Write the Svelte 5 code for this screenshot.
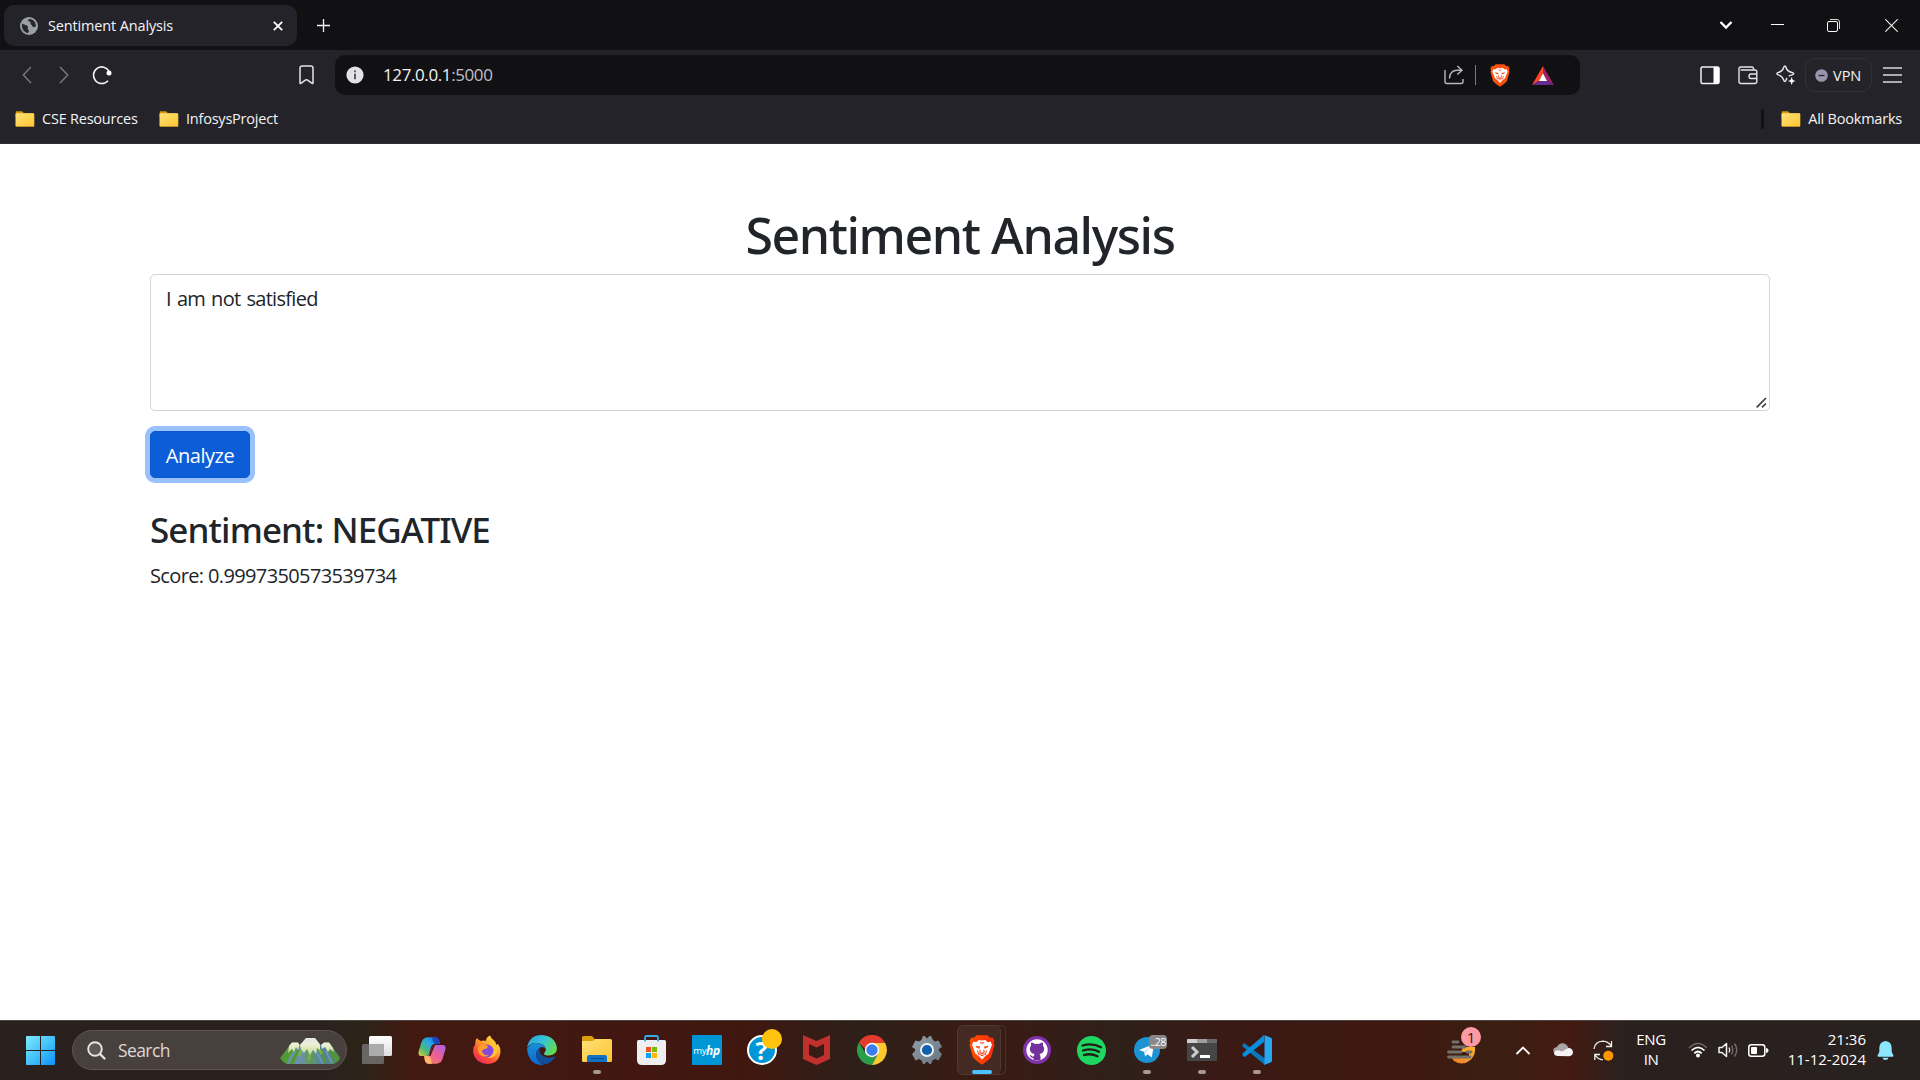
<script>
  let text = $state('I am not satisfied');
</script>

{#snippet folder()}
  <svg class="folder" width="20" height="17" viewBox="0 0 20 17">
    <path d="M.7 3V1.2Q.7.2 1.7.2H7L9 2.2H18.500V6H.7Z" fill="#d9980f" />
    <rect x=".5" y="2.200" width="18.800" height="13.600" rx="1.300" fill="url(#folderFill)" />
    <path d="M1 15.500H19" stroke="#c28a1c" stroke-width=".9" />
  </svg>
{/snippet}

{#snippet lion()}
  <path d="M3.500 5 5.500 5.600 7.500 3.800 10 4.200 12.500 3.800 14.500 5.600 16.500 5 17.700 7.400 16 11.800 15 14.300 12.500 16.200 10 19 7.500 16.200 5 14.300 4 11.800 2.300 7.400Z" fill="#fff" />
  <path d="M5 8.300 8.600 8.900 8 10.600 5.800 9.800ZM15 8.300 11.400 8.900 12 10.600 14.200 9.800Z" fill="#fb542b" />
  <path d="M8.500 5.700 10 6.400 11.500 5.700M8.700 11.200 8.300 13.200 10 14 11.700 13.200 11.300 11.200M6.500 12 7.500 15 10 14.200 12.500 15 13.500 12M8.700 16.200 10 15.600 11.300 16.200" fill="none" stroke="#fb542b" stroke-width=".85" />
{/snippet}

<svg class="defs" width="0" height="0">
  <defs>
    <linearGradient id="folderFill" x1="0" y1="0" x2="1" y2="1"><stop stop-color="#ffe17a" /><stop offset="1" stop-color="#fcc52f" /></linearGradient>
    <linearGradient id="braveFill" x1="0" y1="0" x2="1" y2="0"><stop stop-color="#ff5000" /><stop offset="1" stop-color="#ff2a0a" /></linearGradient>
  </defs>
</svg>

<div class="screen">
  <header class="browser">
    <div class="tabstrip">
      <div class="tab">
        <svg width="18" height="18" viewBox="0 0 18 18">
          <circle cx="9" cy="9" r="9" fill="#9aa0a6" />
          <path d="M2 6.500C3.800 7.800 6 7.800 7.600 9.200 8.800 10.400 6.800 11.400 8.200 12.800 9.500 13.800 8.700 15.300 8 16 4.300 15.600 1.300 12 2 6.500ZM9.200 2C7.500 3.500 7.800 4.800 9.800 4.600 11.500 5 9.800 6.700 11 7.600 12.800 8.200 11.500 9.800 13.500 9.900L15.900 9.500C16.300 5.500 13 2 9.200 2Z" fill="#27262b" />
        </svg>
        <span class="tabtitle">Sentiment Analysis</span>
        <svg class="tabclose" width="10" height="10" viewBox="0 0 10 10"><path d="M.8.800 9.200 9.200M9.200.8.800 9.200" stroke="#fff" stroke-width="1.800" /></svg>
      </div>
      <svg class="newtab" width="13" height="13" viewBox="0 0 13 13"><path d="M6.500 0V13M0 6.500H13" stroke="#f2f2f2" stroke-width="1.300" /></svg>
      <div class="windowbtns">
        <svg width="14" height="10" viewBox="0 0 14 10"><path d="M1.500 2 7 7.500 12.500 2" fill="none" stroke="#fff" stroke-width="2.300" /></svg>
        <svg width="13" height="13" viewBox="0 0 13 13"><path d="M0 5.500H13" stroke="#fff" /></svg>
        <svg width="13" height="13" viewBox="0 0 13 13"><path d="M3 .500H10Q12.500.5 12.500 3V10" fill="none" stroke="#d8d8d8" /><rect x=".5" y="2.500" width="10" height="10" rx="1.500" fill="none" stroke="#fff" /></svg>
        <svg width="13" height="13" viewBox="0 0 13 13"><path d="M.3.300 12.700 12.700M12.700.300.300 12.700" stroke="#eee" stroke-width="1.100" /></svg>
      </div>
    </div>

    <div class="toolbar">
      <div class="nav">
        <svg width="10" height="18" viewBox="0 0 10 18"><path d="M9 1 1.300 9 9 17" fill="none" stroke="#77767c" stroke-width="1.500" /></svg>
        <svg width="10" height="18" viewBox="0 0 10 18"><path d="M1 1 8.700 9 1 17" fill="none" stroke="#77767c" stroke-width="1.500" /></svg>
        <svg width="20" height="20" viewBox="0 0 20 20"><path d="M17.200 6.500A8.300 8.300 0 1 0 16 15.700" fill="none" stroke="#f2f2f4" stroke-width="1.600" /><circle cx="17" cy="8" r="2.500" fill="#fff" /></svg>
      </div>
      <svg class="bookmark" width="15" height="20" viewBox="0 0 15 20"><path d="M1 3.200Q1 1 3.200 1H11.800Q14 1 14 3.200V18Q14 19 13.100 18.300L8.300 14.900Q7.500 14.400 6.700 14.900L1.900 18.300Q1 19 1 18Z" fill="none" stroke="#e4e3ea" stroke-width="1.500" /></svg>
      <div class="address">
        <svg class="info" width="18" height="18" viewBox="0 0 18 18"><circle cx="9" cy="9" r="8.600" fill="#e3e2e9" /><path d="M9 7.800V13.300M9 4.500V6.200" stroke="#3a393f" stroke-width="1.600" /></svg>
        <span class="url">127.0.0.1<span class="port">:5000</span></span>
        <svg class="share" width="20" height="20" viewBox="0 0 20 20"><path d="M1 5V16.500Q1 18.500 3 18.500H17Q19 18.500 19 16.500V14M5.500 13.500C5.500 8 9 5.200 13 5.200H17.500M13.300.900 18 5.200 13.300 9.500" fill="none" stroke="#b9b8bf" stroke-width="1.400" /></svg>
        <span class="sep"></span>
        <svg class="brave" width="20" height="23" viewBox="0 0 20 23"><path d="M5.600.2H14.400L16 2 18 1.900 19.700 4.300 19 6 19.600 7.700 17 17 14 20 10 22.800 6 20 3 17 .4 7.700 1 6 .3 4.300 2 1.900 4 2Z" fill="#fb4f0d" />{@render lion()}</svg>
        <svg width="22" height="19" viewBox="0 0 22 19"><path d="M11 0 0 19 7.300 14.800 11 7.500Z" fill="#ff4724" /><path d="M11 0 22 19 14.700 14.800 11 7.500Z" fill="#9e1f63" /><path d="M0 19H22L14.700 14.800H7.300Z" fill="#662d91" /><path d="M11 7.300 15 15H7Z" fill="#fff" /></svg>
      </div>
      <div class="actions">
        <svg width="20" height="19" viewBox="0 0 20 19"><rect x="1" y="1" width="18" height="16.500" rx="1.500" fill="none" stroke="#f0f0f2" stroke-width="1.500" /><path d="M13.500 1H18Q19.200 1 19.200 2V16.500Q19.200 17.700 18 17.700H13.500Z" fill="#fff" /></svg>
        <svg width="20" height="19" viewBox="0 0 20 19"><path d="M15.500 4V2.500Q15.500 1 14 1H2.500Q1 1 1 2.500V15.500Q1 17.500 3 17.500H16.500Q18.800 17.500 18.800 15.500V5.500Q18.800 4 17 4H2.500M19 8H13Q11 8 11 10.300 11 12.500 13 12.500H19" fill="none" stroke="#e4e3ea" stroke-width="1.400" /></svg>
        <svg width="20" height="20" viewBox="0 0 20 20"><path d="M12.800 11.200Q13.800 10.500 16 9.900 17.700 9.400 17.700 8.700 17.700 8 16 7.500 11 6.300 10 2.200 9.600 1 8.900 1 8.200 1 7.800 2.200 6.500 6.300 2.200 7.500 1 7.900 1 8.700 1 9.500 2.200 9.900 6.300 11 7.800 15.300 8.200 16.500 8.900 16.500 9.600 16.500 10 15.300 10.400 14 11 13" fill="none" stroke="#e4e3ea" stroke-width="1.500" /><path d="M15.700 12 16.800 14.900 19.500 16 16.800 17.100 15.700 20 14.600 17.100 12 16 14.600 14.900Z" fill="#fff" /></svg>
      </div>
      <div class="vpn">
        <svg width="13" height="13" viewBox="0 0 13 13"><circle cx="6.500" cy="6.500" r="6.300" fill="#9796ad" /><path d="M3.500 6.500H9.500" stroke="#242329" stroke-width="1.300" /></svg>
        <span>VPN</span>
      </div>
      <svg class="menu" width="19" height="16" viewBox="0 0 19 16"><path d="M0 1H19M0 8H19M0 15H19" stroke="#dad9df" stroke-width="1.500" /></svg>
    </div>

    <div class="bookmarks">
      {@render folder()}<span class="bm cse">CSE Resources</span>
      {@render folder()}<span class="bm inf">InfosysProject</span>
      <span class="bmsep"></span>
      {@render folder()}<span class="bm all">All Bookmarks</span>
    </div>
  </header>

  <main>
    <h1>Sentiment Analysis</h1>
    <div class="field">
      <textarea bind:value={text} spellcheck="false"></textarea>
      <svg class="grip" width="11" height="11" viewBox="0 0 11 11"><path d="M.7 10.300 10 1M6 10.300 10 6.500" stroke="#3f3f3f" stroke-width="1.700" /></svg>
    </div>
    <button class="analyze">Analyze</button>
    <h3>Sentiment: NEGATIVE</h3>
    <p>Score: 0.9997350573539734</p>
  </main>

  <footer class="taskbar">
    <svg class="start" width="29" height="29" viewBox="0 0 29 29">
      <defs><linearGradient id="win" x1="0" y1="0" x2="1" y2="1"><stop stop-color="#7deafd" /><stop offset=".5" stop-color="#45c2fb" /><stop offset="1" stop-color="#0a93f8" /></linearGradient></defs>
      <path d="M1 0H14V14H0V1Q0 0 1 0ZM15 0H28Q29 0 29 1V14H15ZM0 15H14V29H1Q0 29 0 28ZM15 15H29V28Q29 29 28 29H15Z" fill="url(#win)" />
    </svg>
    <div class="search">
      <svg width="19" height="19" viewBox="0 0 19 19"><circle cx="8" cy="8" r="6.800" fill="#5d5756" stroke="#e8e4e3" stroke-width="1.900" /><path d="M13 13 17.500 17.500" stroke="#e8e4e3" stroke-width="2.400" stroke-linecap="round" /></svg>
      <span>Search</span>
      <svg class="mountain" width="60" height="27" viewBox="0 0 60 27">
        <defs>
          <linearGradient id="range" x1="0" y1="0" x2="1" y2="0"><stop stop-color="#4f9334" /><stop offset=".2" stop-color="#5b9a55" /><stop offset=".35" stop-color="#6d8fae" /><stop offset=".5" stop-color="#5f9d58" /><stop offset=".7" stop-color="#567fa8" /><stop offset="1" stop-color="#4f8f3c" /></linearGradient>
          <linearGradient id="snow" x1="0" y1="0" x2="0" y2="1"><stop stop-color="#e6e5e6" /><stop offset=".4" stop-color="#edf0d2" /><stop offset="1" stop-color="#bcd68a" /></linearGradient>
        </defs>
        <path d="M0 21 12 5.500H18L20 8 26 1H35L41 8 44 5.500H49L60 20.500Q60 24 54 27H7Q3 26 0 21Z" fill="url(#range)" />
        <path d="M11 13 4 24M18 13 12 26M41 13 45 26M50 13 57 23" stroke="#4f9c2c" stroke-width="2.500" />
        <path d="M25 12 16 27M35 12 43 27M15 14 8 26M46 14 52 26" stroke="#6f92bb" stroke-width="2" />
        <path d="M22 12 19 19M30 14 29 23M38 11 42 17" stroke="#7db048" stroke-width="2.500" />
        <path d="M12 5.500H18L19.500 8 18 13 16 10 14 15 12 12 8 16 9 9ZM44 5.500H49L53 11 54 15 50 12 48 15 45 10 42 12 41 8ZM26 1H35L40 7.500 40 13 37 11 36 17 33 13 30 18 27 12 24 16 21 12 20 8Z" fill="url(#snow)" />
      </svg>
    </div>

    <div class="apps">
      <div class="app">
        <svg width="30" height="28" viewBox="0 0 30 28"><defs><linearGradient id="tv" x2="0" y2="1"><stop stop-color="#fff" /><stop offset="1" stop-color="#ddd" /></linearGradient></defs><rect y="8" width="22" height="20" rx="1.500" fill="#686664" /><rect x="7" width="23" height="20" rx="1.500" fill="url(#tv)" /><path d="M7 8H22V20H8Q7 20 7 19Z" fill="#ababab" /></svg>
      </div>
      <div class="app">
        <svg width="28" height="27" viewBox="0 0 28 27">
          <defs><linearGradient id="cp1" x1="1" y1="0" x2="0" y2="1"><stop stop-color="#1560dc" /><stop offset=".4" stop-color="#2aa6e2" /><stop offset=".7" stop-color="#50b878" /><stop offset="1" stop-color="#e9ce2d" /></linearGradient><linearGradient id="cp2" x1="1" y1="0" x2="0" y2="1"><stop stop-color="#a560ee" /><stop offset=".5" stop-color="#ed5f92" /><stop offset="1" stop-color="#fa8c52" /></linearGradient></defs>
          <path d="M7 1Q8 .3 10 .3H18Q20 .3 21 3L22 7H17Q14 7 13 10L11 17Q10 19 8 19H3Q0 19 .5 15L3.500 5Q4.500 2 7 1Z" fill="url(#cp1)" />
          <path d="M14 .3H18Q20 .3 21 3L22 7H17.500Q16 7 15 4Z" fill="#1c45bf" />
          <path d="M21 26Q20 26.700 18 26.700H10Q8 26.700 7 24L6 19H9Q11 19 12 16L14.500 10Q15.500 8 17 8H25Q28 8 27.500 12L24.500 22Q23.500 25 21 26Z" fill="url(#cp2)" />
          <path d="M14 26.700H10Q8 26.700 7 24L6.300 19H9Q12 19 12.500 21Z" fill="#ffb36c" />
          <path d="M15.500 8H17L12.500 19H11Z" fill="#411711" />
        </svg>
      </div>
      <div class="app">
        <svg width="30" height="30" viewBox="0 0 30 30">
          <defs><linearGradient id="ff" x1=".9" y1="0" x2=".2" y2="1"><stop stop-color="#fff04a" /><stop offset=".4" stop-color="#ffa52c" /><stop offset=".7" stop-color="#ff5038" /><stop offset="1" stop-color="#e92260" /></linearGradient></defs>
          <path d="M5 3Q7 6 9 6 12 5 14 6 14 2 18 .500 19 4 23 6.500 24 8 24 10L26 9Q29 13 28.500 17 27 29 15 29 3 28 1 17 1 13 2.500 10L3 12Q3 5 5 3Z" fill="url(#ff)" />
          <circle cx="15" cy="16" r="6.500" fill="#8748e0" />
          <path d="M6 12Q10 8 16 11L15 13.500Q11 14 10 16 11 21 17 20 13 23 8.500 20 5 17 6 12Z" fill="#ff9d29" />
          <path d="M18 9Q24 12 21 18 19 22 15 23 23 24 26 16 25 7 18 2Z" fill="#ffc337" />
        </svg>
      </div>
      <div class="app">
        <svg width="30" height="30" viewBox="0 0 30 30">
          <defs><linearGradient id="ed1" x1="0" y1=".2" x2="1" y2=".6"><stop stop-color="#2aa3df" /><stop offset=".5" stop-color="#35c4d7" /><stop offset="1" stop-color="#63dc4c" /></linearGradient><linearGradient id="ed2" x2="0" y2="1"><stop stop-color="#1b8fd9" /><stop offset="1" stop-color="#0a68cb" /></linearGradient></defs>
          <path d="M0 13Q2 0 15 0 28 1 30 13 30 20 22 20.500 17 20.500 17 18.500L19 15Q18 8 9 8 3 8 0 13Z" fill="url(#ed1)" />
          <path d="M0 14Q3 8 9 8 17 8 18.700 14 18 12 14 12 9 15 9 20 10 27 17 30 2 31 0 14Z" fill="url(#ed2)" />
          <path d="M12.500 13Q7 18 10 24 14 30 20 29 25 27 28.500 22 29 21 27.500 21.500 21 24 16 21 12 18 12.500 13Z" fill="#124d98" />
        </svg>
      </div>
      <div class="app">
        <svg width="30" height="28" viewBox="0 0 30 28">
          <path d="M0 7V1.500Q0 0 1.500 0H9Q10 0 11 1L13 3.500H28V8H0Z" fill="#dda006" />
          <path d="M0 5H10Q12 5 13 3H28.500Q30 3 30 4.500V24.500Q30 26 28.500 26H1.500Q0 26 0 24.500Z" fill="url(#folderFill)" />
          <path d="M5 26V21Q5 19 7 19H23Q25 19 25 21V26Z" fill="#1372c5" /><path d="M8.500 22.500H21.500" stroke="#074b93" stroke-width="1.200" />
        </svg>
        <i class="dot"></i>
      </div>
      <div class="app">
        <svg width="29" height="30" viewBox="0 0 29 30">
          <path d="M1.500 5H27.500Q29 5 29 6.500V25Q29 30 24 30H5Q0 30 0 25V6.500Q0 5 1.500 5Z" fill="#efefef" />
          <path d="M8 6.500V2.500Q8 1 9.500 1H19.500Q21 1 21 2.500V6.500" fill="none" stroke="#30aee9" stroke-width="1.800" />
          <path d="M9 12H14V17H9Z" fill="#f25022" /><path d="M15 12H20V17H15Z" fill="#7fba00" /><path d="M9 18H14V23H9Z" fill="#00a4ef" /><path d="M15 18H20V23H15Z" fill="#ffb900" />
        </svg>
      </div>
      <div class="app"><div class="myhp"><span>my</span><b>hp</b></div></div>
      <div class="app">
        <div class="help">?</div>
        <i class="notice"></i>
      </div>
      <div class="app">
        <svg width="27" height="30" viewBox="0 0 27 30"><path d="M0 0 13.500 6 27 0V24L13.500 30 0 24ZM6 9V20L13.500 23.500 21 20V9L13.500 12.500Z" fill="#c0302c" fill-rule="evenodd" /></svg>
      </div>
      <div class="app">
        <svg width="30" height="30" viewBox="0 0 30 30">
          <path d="M2 7.500A15 15 0 0 1 28 7.500L15 15Z" fill="#e33b2e" /><path d="M15 8H28.200A15 15 0 0 1 14.500 30L21 18.500Z" fill="#fdc82f" /><path d="M15 30A15 15 0 0 1 2 7.500L8.700 18.500 15 22 20 21Z" fill="#2b9f47" /><path d="M2 7.500Q3 5.500 5 4L15 8 9 15Z" fill="#e33b2e" />
          <circle cx="15" cy="15" r="7.200" fill="#fff" /><circle cx="15" cy="15" r="5.700" fill="#3b7ded" />
        </svg>
      </div>
      <div class="app">
        <svg width="30" height="28" viewBox="0 0 30 28">
          <defs><linearGradient id="gear" x2="1" y2="1"><stop stop-color="#93a0a9" /><stop offset="1" stop-color="#68737d" /></linearGradient></defs>
          <path d="M11 0H12.500L15 2.500 17.500 0H19L21 4 23 5.500 26.500 4.500 30 11 27 13V15L30 18 26.500 24.500 23 23 20.500 24.500 19 28H17.500L15 25.500 12.500 28H11L9.500 24.500 7 23 3.500 24.500 0 18 3 15V13L0 11 3.500 4.500 7 5.500 9.500 4Z" fill="url(#gear)" />
          <circle cx="15" cy="14" r="7" fill="#eef2f5" /><circle cx="15" cy="14" r="5.100" fill="#1060ae" />
        </svg>
      </div>
      <div class="app active">
        <svg width="26" height="30" viewBox="0 0 20 23"><path d="M5.600.2H14.400L16 2 18 1.900 19.700 4.300 19 6 19.600 7.700 17 17 14 20 10 22.800 6 20 3 17 .4 7.700 1 6 .3 4.300 2 1.900 4 2Z" fill="url(#braveFill)" />{@render lion()}</svg>
        <i class="bar"></i>
      </div>
      <div class="app">
        <svg width="28" height="28" viewBox="0 0 28 28"><circle cx="14" cy="14" r="14" fill="#8131ab" /><circle cx="14" cy="14" r="10.700" fill="#fff" /><path d="M8.300 6.500Q10.500 6.500 12 8 14 7.600 16 8 17.500 6.500 19.700 6.500 20.300 8 19.900 9.500 21.500 11.500 21 14 20.300 17.500 16.500 18 17.500 19 17.500 21V24.500H10.500V22Q8.500 22.200 7.500 20.500L6.300 19.500Q8 19 9 20.300 10 21 10.700 20.300L11.500 18Q7.700 17.500 7 14 6.500 11.500 8.100 9.500 7.700 8 8.300 6.500Z" fill="#74309c" /></svg>
      </div>
      <div class="app">
        <svg width="29" height="29" viewBox="0 0 29 29"><circle cx="14.500" cy="14.500" r="14.500" fill="#1ed760" /><path d="M5.500 9.500Q15.500 6.500 24 11.300M6 14.500Q15 11.700 22 15.700M7 19Q14 17 20.500 20.300" fill="none" stroke="#211d17" stroke-width="2.300" stroke-linecap="round" /></svg>
      </div>
      <div class="app">
        <svg width="26" height="26" viewBox="0 0 26 26"><circle cx="13" cy="13" r="13" fill="#1c93d2" /><path d="M5 13 20 7 17.800 20.500 13.500 17.200 11.300 19.500 10 14.800Z" fill="#fff" /><path d="M10 14.800 17 9.500 11.500 15.500 11.300 19.500Z" fill="#b9dcef" /></svg>
        <span class="badge">..28</span>
        <i class="dot"></i>
      </div>
      <div class="app">
        <svg width="30" height="22" viewBox="0 0 30 22"><rect width="30" height="22" rx="1" fill="#464646" /><path d="M0 4V1Q0 0 1 0H10V4Z" fill="#cfcfcf" /><path d="M10 0H20V4H10Z" fill="#9e9e9e" /><path d="M20 0H29Q30 0 30 1V4H20Z" fill="#6a6a6a" /><path d="M5 8 10 13 5 18" fill="none" stroke="#cfcfcf" stroke-width="3" /><rect x="13" y="16" width="10" height="3" fill="#fff" /></svg>
        <i class="dot"></i>
      </div>
      <div class="app">
        <svg width="30" height="30" viewBox="0 0 30 30"><path d="M1.500 8.500Q2.500 8 3.500 9L23 23.500V30L.5 11.500Q0 10 1.500 8.500Z" fill="#0a78be" /><path d="M.5 18.500 22 0V7L3.500 21.500Q2.500 22 1.500 21.500Q0 20 .5 18.500Z" fill="#0a8edb" /><path d="M22 0 28.500 2.500Q30 3 30 4.500V25.500Q30 27 28.500 27.500L22 30Q22.500 30 22.500 29V1Q22.500 0 22 0Z" fill="#27a6f2" /></svg>
        <i class="dot"></i>
      </div>
    </div>

    <div class="tray">
      <div class="weather">
        <svg width="29" height="24" viewBox="0 0 29 24">
          <defs><linearGradient id="moon" x1="1" y1="0" x2="0" y2="1"><stop stop-color="#fbb62f" /><stop offset="1" stop-color="#ea7a26" /></linearGradient></defs>
          <path d="M16 7H28Q29 16 22 21 15 26 7 21L4 17H22V12H14Z" fill="url(#moon)" />
          <path d="M6 2H11M6 7H18M1.500 12H14M20 12H24M1.500 17H23" stroke="#777069" stroke-width="2.800" stroke-linecap="round" />
        </svg>
        <span class="count">1</span>
      </div>
      <svg class="up" width="14" height="9" viewBox="0 0 14 9"><path d="M1 7.500 7 1.500 13 7.500" fill="none" stroke="#f5f5f5" stroke-width="1.900" stroke-linecap="round" /></svg>
      <svg class="cloud" width="20" height="14" viewBox="0 0 20 14"><path d="M2 11Q0 9 .3 6.500 1 4 4 4 6 0 10 .300 14 1 15.500 5L9 9Z" fill="#aaa6a5" /><path d="M5 13Q1 13 1 10 2 6.500 6 7.500L9 8.500 15 5Q19 4.500 20 9 20 13 16 13.200Z" fill="#f4f2f2" /></svg>
      <svg class="sync" width="21" height="21" viewBox="0 0 21 21"><path d="M1 9Q2 1.500 10 1.200 15 1.500 18 5.500M18.500 1V6.500H13M1.800 20V14.500H7M2 15Q5 19.500 10 19.800" fill="none" stroke="#f0eeee" stroke-width="1.300" /><circle cx="15.300" cy="15.700" r="5" fill="#ff9800" /></svg>
      <div class="lang"><span>ENG</span><span>IN</span></div>
      <svg class="wifi" width="20" height="16" viewBox="0 0 20 16"><path d="M1 6Q10-3 19 6" fill="none" stroke="#716968" stroke-width="1.400" /><path d="M3.500 8.500Q10 2 16.500 8.500M6.300 11.300Q10 7.700 13.700 11.300" fill="none" stroke="#fff" stroke-width="1.700" /><circle cx="10" cy="13.500" r="2" fill="#fff" /></svg>
      <svg class="vol" width="20" height="16" viewBox="0 0 20 16"><path d="M1 5.500H4L8.500 1.500V14.500L4 10.500H1Z" fill="none" stroke="#f5f3f3" stroke-width="1.500" stroke-linejoin="round" /><path d="M11 5.500Q12.500 8 11 10.500" fill="none" stroke="#f5f3f3" stroke-width="1.300" /><path d="M13.500 3.500Q16 8 13.500 12.500M16.500 1.500Q21 8 16.500 14.500" fill="none" stroke="#766f6d" stroke-width="1.400" /></svg>
      <svg class="batt" width="21" height="13" viewBox="0 0 21 13"><rect x=".8" y=".8" width="16" height="11.400" rx="2.500" fill="none" stroke="#fff" stroke-width="1.500" /><rect x="3" y="3" width="6" height="7" rx=".8" fill="#fff" /><path d="M18.500 4.500Q20 4.500 20 6.500T18.500 8.500Z" fill="#fff" stroke="#fff" /></svg>
      <div class="clock"><span class="time">21:36</span><span class="date">11-12-2024</span></div>
      <svg class="bell" width="17" height="19" viewBox="0 0 17 19"><path d="M8.500 0Q14.500 .5 14.700 7V11L16.500 14.500Q16.500 15.700 15.500 15.700H1.500Q.5 15.700 .5 14.500L2.300 11V7Q2.500 .5 8.500 0ZM5.500 16.700H11.500Q11 19 8.500 19T5.500 16.700Z" fill="#8ce6fd" /></svg>
    </div>
  </footer>
</div>

<style>
  :global(body) { margin: 0; background: #fff; overflow: hidden; }
  .defs { position: absolute; }
  svg { display: block; flex: none; }
  .screen {
    width: 1920px; height: 1080px; display: flex; flex-direction: column;
    font-family: "Open Sans", "Noto Sans", sans-serif; color: #212529;
  }
  .screen span { white-space: nowrap; }

  .browser { height: 144px; background: #242329; color: #f3f3f5; box-sizing: border-box; border-bottom: 1px solid #2e2d33; font-size: 14.500px; }
  .tabstrip { height: 50px; background: #111113; display: flex; align-items: center; padding-left: 4px; box-sizing: border-box; }
  .tab { width: 293px; height: 41px; margin-top: 1px; border-radius: 10px; background: #242329; display: flex; align-items: center; padding: 0 14px 0 16px; box-sizing: border-box; }
  .tabtitle { margin-left: 10px; letter-spacing: -.15px; }
  .tabclose { margin-left: auto; }
  .newtab { margin-left: 20px; }
  .windowbtns { margin-left: auto; display: flex; align-items: center; padding-right: 22px; }
  .windowbtns svg + svg { margin-left: 38px; }
  .windowbtns svg:nth-child(3) { margin-left: 43px; }
  .windowbtns svg:nth-child(4) { margin-left: 45px; }

  .toolbar { height: 50px; display: flex; align-items: center; }
  .nav { display: flex; align-items: center; gap: 28px; padding-left: 22px; }
  .nav svg:nth-child(2) { margin-left: -1px; }
  .nav svg:last-child { margin-left: -5px; }
  .bookmark { margin-left: 187px; }
  .address { width: 1245px; height: 40px; margin-left: 21px; border-radius: 10px; background: #111113; display: flex; align-items: center; padding: 0 26px 0 11px; box-sizing: border-box; }
  .url { margin: 0 0 2px 19px; font-size: 17px; letter-spacing: -.4px; color: #f2f2f4; }
  .port { color: #c0bfc6; }
  .share { margin-left: auto; }
  .sep { width: 1px; height: 20px; background: #7b7a80; margin: 0 14px 0 11px; }
  .brave { margin-right: 22px; }
  .actions { display: flex; align-items: center; gap: 18px; margin-left: 120px; }
  .vpn { width: 67px; height: 34px; margin-left: 9px; border: 1px solid #323138; border-radius: 10px; box-sizing: border-box; display: flex; align-items: center; padding-left: 9px; gap: 5px; letter-spacing: 0; }
  .menu { margin-left: 11px; }

  .bookmarks { height: 36px; display: flex; align-items: center; padding: 1px 18px 0 15px; }
  .bm { margin: 0 0 2px 7px; letter-spacing: -.22px; }
  .cse { width: 96px; margin-right: 21px; }
  .bmsep { width: 3px; height: 20px; background: #111113; border-radius: 2px; margin: 0 17px 0 auto; }

  main { flex: 1; padding: 61px 150px 0; background: #fff; }
  h1, h3 { margin: 0 0 10px; font-family: "Noto Sans", "Open Sans", sans-serif; font-weight: 500; line-height: 1.200; }
  h1 { margin-bottom: 9px; font-size: 50px; text-align: center; letter-spacing: -1.400px; }
  .field { position: relative; }
  textarea { display: block; box-sizing: border-box; width: 1620px; height: 137px; padding: 8.500px 15px; border: 1px solid #ced4da; border-radius: 5px; font: 20px/30px "Open Sans", sans-serif; letter-spacing: -.7px; word-spacing: 1.500px; color: #212529; outline: 0; resize: none; }
  .grip { position: absolute; right: 3px; bottom: 3px; }
  .analyze { display: flex; align-items: center; justify-content: center; width: 100px; height: 47px; margin: 20px 0 31px; padding: 2px 0 0; border: 1px solid #0a58ca; border-radius: 5px; background: #0b5ed7; box-shadow: 0 0 0 5px #98c1fe; color: #fff; font: 20px/30px "Open Sans", sans-serif; letter-spacing: -.45px; }
  h3 { font-size: 35px; letter-spacing: -.9px; }
  p { margin: 0; font-size: 20px; line-height: 30px; letter-spacing: -.63px; }

  .taskbar {
    height: 60px; box-sizing: border-box; border-top: 1px solid #4b4642; padding-bottom: 1px; display: flex; align-items: center; color: #fff;
    background: linear-gradient(90deg, #2a211e 0, #2a211e 320px, #2d2418 365px, #421911 410px, #421712 650px, #40170f 740px, #2d2019 860px, #3a1b12 980px, #2f201a 1115px, #3b1914 1240px, #3e1911 1420px, #3b1f12 1490px, #431a11 1570px, #2a211f 1625px, #29211f 1920px);
  }
  .start { margin: 1px 0 0 26px; }
  .search { width: 275px; height: 40px; margin-left: 17px; border: 1px solid #5d5552; border-radius: 20px; box-sizing: border-box; background: #48403d; display: flex; align-items: center; padding: 0 6px 0 14px; }
  .search span { margin: 0 0 1px 12px; font-size: 17.500px; letter-spacing: -.6px; color: #dcd8d7; }
  .mountain { margin-left: auto; }
  .apps { display: flex; margin-left: 2px; }
  .app { width: 55px; height: 58px; display: flex; align-items: center; justify-content: center; position: relative; }
  .app svg { position: relative; }
  .dot, .bar { position: absolute; left: 50%; bottom: 5px; width: 8px; height: 4px; margin-left: -4px; border-radius: 2px; background: #a59794; }
  .bar { width: 20px; margin-left: -10px; background: #4cc2ff; }
  .active::before { content: ""; position: absolute; left: 3px; top: 4px; width: 44px; height: 50px; box-sizing: border-box; border: 1px solid #4f3932; border-radius: 6px; background: #432b24; }
  .active::after { content: ""; position: absolute; left: 42px; top: 4px; width: 10px; height: 50px; box-sizing: border-box; border: 1px solid #4a332c; border-left: 0; border-radius: 0 6px 6px 0; }
  .myhp { width: 30px; height: 30px; border-radius: 1px; background: #0096d6; display: flex; align-items: center; justify-content: center; font-size: 9.500px; letter-spacing: -.4px; }
  .myhp b { font-size: 12px; font-style: italic; }
  .help { width: 30px; height: 30px; box-sizing: border-box; border: 2px solid #fff; border-radius: 50%; background: #0096d6; text-align: center; font: 700 25px/26px "Open Sans", sans-serif; }
  .notice { position: absolute; left: 28px; top: 8px; width: 20px; height: 20px; border-radius: 50%; background: #ffc20d; }
  .badge { position: absolute; left: 30px; top: 14px; width: 18px; height: 14px; border-radius: 4px; background: #888; font-size: 10.500px; line-height: 14px; text-align: center; letter-spacing: -.6px; }

  .tray { margin-left: auto; display: flex; align-items: center; padding-right: 26px; font-size: 15px; }
  .weather { position: relative; margin: 3px 40px 0 0; }
  .count { position: absolute; left: 14px; top: -13px; width: 20px; height: 20px; border-radius: 50%; background: #ff99a4; color: #2a1a1a; text-align: center; font-size: 15px; line-height: 20px; }
  .up { margin-right: 23px; }
  .cloud { margin-right: 20px; }
  .lang { width: 40px; margin: 0 17px 0 17px; }
  .lang, .clock { display: flex; flex-direction: column; line-height: 20px; margin-bottom: 2px; }
  .lang { align-items: center; letter-spacing: -.4px; }
  .wifi { margin-right: 10px; }
  .vol { margin-right: 10px; }
  .clock { width: 78px; margin-left: 19px; margin-right: 11px; align-items: flex-end; letter-spacing: 0; }
</style>
